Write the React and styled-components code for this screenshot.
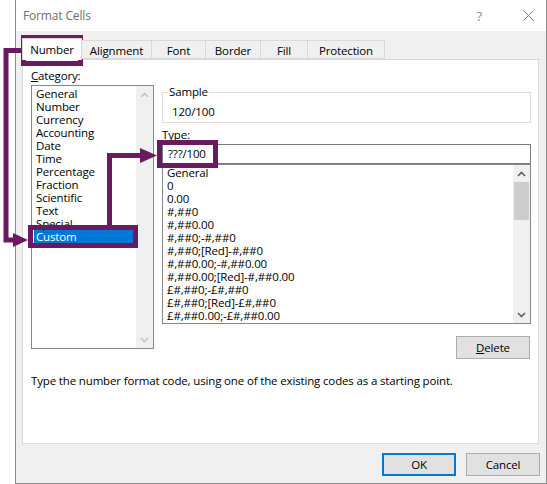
import React from "react";
import styled, { createGlobalStyle } from "styled-components";

const GlobalStyle = createGlobalStyle`
	html, body {
		margin: 0;
		padding: 0;
		background: #ffffff;
	}
	body {
		font-family: "Open Sans", "Noto Sans", sans-serif;
		font-size: 11.5px;
		letter-spacing: -0.15px;
		color: #000;
	}
`;

const purple = "#6a1b5f";

const Page = styled.div`
	position: relative;
	width: 547px;
	height: 484px;
	overflow: hidden;
`;

const Dialog = styled.div`
	box-sizing: border-box;
	margin-left: 15px;
	width: 532px;
	height: 484px;
	background: #f0f0f0;
	border: 1px solid #8c8c8c;
	border-top: none;
	display: flex;
	flex-direction: column;
`;

const TitleBar = styled.div`
	height: 31px;
	background: #fff;
	display: flex;
	align-items: center;
	padding: 0 12px 0 7px;
	color: #6f6f6f;
	font-size: 12px;

	.title {
		flex: 1;
	}
	.help {
		margin-right: 41px;
		font-size: 13px;
		color: #8a8a8a;
	}
`;

const Tabs = styled.div`
	display: flex;
	align-items: flex-end;
	height: 28px;
	padding-left: 6px;
	position: relative;
	z-index: 1;
`;

const Tab = styled.div`
	box-sizing: border-box;
	width: ${(p) => p.w}px;
	height: ${(p) => (p.active ? 22 : 19)}px;
	margin-bottom: ${(p) => (p.active ? -1 : 0)}px;
	display: flex;
	align-items: center;
	justify-content: center;
	background: ${(p) => (p.active ? "#fff" : "#f0f0f0")};
	border: 1px solid #d9d9d9;
	border-bottom: ${(p) => (p.active ? "none" : "1px solid #d9d9d9")};
	border-left: ${(p) => (p.first || p.active ? "1px solid #d9d9d9" : "none")};
	padding-top: ${(p) => (p.active ? 0 : 1)}px;
`;

const Panel = styled.div`
	box-sizing: border-box;
	margin-left: 6px;
	width: 517px;
	height: 385px;
	background: #fff;
	border: 1px solid #d9d9d9;
	padding: 7px 8px 0 8px;
	display: flex;
	flex-direction: column;
`;

const Columns = styled.div`
	display: flex;
	gap: 8px;
`;

const LeftCol = styled.div`
	width: 123px;
	display: flex;
	flex-direction: column;
`;

const RightCol = styled.div`
	width: 369px;
	padding-top: 25px;
	display: flex;
	flex-direction: column;
`;

const Label = styled.div`
	height: 18px;
	line-height: 18px;
	u {
		text-decoration: underline;
	}
`;

const ListBox = styled.div`
	box-sizing: border-box;
	width: ${(p) => p.w}px;
	height: ${(p) => p.h}px;
	border: 1px solid #828790;
	display: flex;
	overflow: hidden;
	background: #fff;
`;

const Items = styled.div`
	flex: 1;
	padding: 1px 1px 0 2px;
	overflow: hidden;
`;

const Item = styled.div`
	height: 13px;
	line-height: 13px;
	padding-left: 2px;
	white-space: nowrap;
	background: ${(p) => (p.selected ? "#0078d7" : "transparent")};
	color: ${(p) => (p.selected ? "#fff" : "#000")};
`;

const ScrollBar = styled.div`
	width: 17px;
	background: #f0f0f0;
	display: flex;
	flex-direction: column;
	align-items: center;
`;

const ScrollArrow = styled.div`
	height: 17px;
	width: 17px;
	display: flex;
	align-items: center;
	justify-content: center;
`;

const ScrollTrack = styled.div`
	flex: 1;
	width: 17px;
`;

const Thumb = styled.div`
	width: 15px;
	margin: 0 auto;
	height: 38px;
	background: #cdcdcd;
`;

const GroupBox = styled.div`
	box-sizing: border-box;
	width: 369px;
	height: 31px;
	border: 1px solid #dcdcdc;
	padding-left: 5px;

	.legend {
		display: block;
		width: fit-content;
		margin-top: -8px;
		padding: 0 1px;
		line-height: 14px;
		background: #fff;
	}
	.value {
		margin-top: 6px;
		padding-left: 4px;
		line-height: 14px;
	}
`;

const TypeLabel = styled.div`
	margin-top: 3px;
	height: 18px;
	line-height: 18px;
`;

const Input = styled.div`
	box-sizing: border-box;
	width: 369px;
	height: 20px;
	border: 1px solid #7a7a7a;
	padding-left: 5px;
	line-height: 18px;
`;

const ButtonRow = styled.div`
	display: flex;
	justify-content: flex-end;
	gap: 10px;
	padding-right: ${(p) => p.pr || 0}px;
	margin-top: ${(p) => p.mt || 0}px;
`;

const Button = styled.div`
	box-sizing: border-box;
	width: ${(p) => p.w || 74}px;
	height: 23px;
	display: flex;
	align-items: center;
	justify-content: center;
	background: #e1e1e1;
	border: ${(p) => (p.primary ? "2px solid #0078d7" : "1px solid #adadad")};
	u {
		text-decoration: underline;
	}
`;

const Hint = styled.div`
	margin-top: 14px;
	line-height: 16px;
`;

const Overlay = styled.svg`
	position: absolute;
	left: 0;
	top: 0;
	pointer-events: none;
`;

const Chevron = ({ up, color }) => (
	<svg width="9" height="6" viewBox="0 0 9 6">
		<path
			d={up ? "M1 5 L4.5 1.5 L8 5" : "M1 1 L4.5 4.5 L8 1"}
			fill="none"
			stroke={color}
			strokeWidth="1.6"
		/>
	</svg>
);

const categories = [
	"General",
	"Number",
	"Currency",
	"Accounting",
	"Date",
	"Time",
	"Percentage",
	"Fraction",
	"Scientific",
	"Text",
	"Special",
	"Custom",
];

const formats = [
	"General",
	"0",
	"0.00",
	"#,##0",
	"#,##0.00",
	"#,##0;-#,##0",
	"#,##0;[Red]-#,##0",
	"#,##0.00;-#,##0.00",
	"#,##0.00;[Red]-#,##0.00",
	"£#,##0;-£#,##0",
	"£#,##0;[Red]-£#,##0",
	"£#,##0.00;-£#,##0.00",
	"£#,##0.00;[Red]-£#,##0.00",
];

const tabs = [
	{ name: "Number", w: 60 },
	{ name: "Alignment", w: 70 },
	{ name: "Font", w: 54 },
	{ name: "Border", w: 55 },
	{ name: "Fill", w: 47 },
	{ name: "Protection", w: 77 },
];

const App = () => {
	return (
		<Page>
			<GlobalStyle />
			<Dialog>
				<TitleBar>
					<span className="title">Format Cells</span>
					<span className="help">?</span>
					<svg width="11" height="11" viewBox="0 0 11 11">
						<path d="M0.5 0.5 L10.5 10.5 M10.5 0.5 L0.5 10.5" stroke="#7a7a7a" strokeWidth="1" />
					</svg>
				</TitleBar>
				<Tabs>
					{tabs.map((t, i) => (
						<Tab key={t.name} w={t.w} active={i === 0} first={i === 0}>
							{t.name}
						</Tab>
					))}
				</Tabs>
				<Panel>
					<Columns>
						<LeftCol>
							<Label>
								<u>C</u>ategory:
							</Label>
							<ListBox w={123} h={264}>
								<Items>
									{categories.map((c) => (
										<Item key={c} selected={c === "Custom"}>
											{c}
										</Item>
									))}
								</Items>
								<ScrollBar>
									<ScrollArrow>
										<Chevron up color="#c4c4c4" />
									</ScrollArrow>
									<ScrollTrack />
									<ScrollArrow>
										<Chevron color="#c4c4c4" />
									</ScrollArrow>
								</ScrollBar>
							</ListBox>
						</LeftCol>
						<RightCol>
							<GroupBox>
								<span className="legend">Sample</span>
								<div className="value">120/100</div>
							</GroupBox>
							<TypeLabel>Type:</TypeLabel>
							<Input>???/100</Input>
							<ListBox w={369} h={160}>
								<Items>
									{formats.map((f) => (
										<Item key={f}>{f}</Item>
									))}
								</Items>
								<ScrollBar>
									<ScrollArrow>
										<Chevron up color="#606060" />
									</ScrollArrow>
									<ScrollTrack>
										<Thumb />
									</ScrollTrack>
									<ScrollArrow>
										<Chevron color="#606060" />
									</ScrollArrow>
								</ScrollBar>
							</ListBox>
						</RightCol>
					</Columns>
					<ButtonRow pr={0} mt={-13}>
						<Button w={74}>
							<span>
								<u>D</u>elete
							</span>
						</Button>
					</ButtonRow>
					<Hint>Type the number format code, using one of the existing codes as a starting point.</Hint>
				</Panel>
				<ButtonRow pr={6} mt={9}>
					<Button primary>OK</Button>
					<Button>Cancel</Button>
				</ButtonRow>
			</Dialog>
			<Overlay width="547" height="484" viewBox="0 0 547 484">
				<g fill="none" stroke={purple} strokeWidth="5">
					<rect x="23.5" y="37.5" width="57" height="26" />
					<path d="M21 50.5 H6 V240 H16" />
					<rect x="30.5" y="227.5" width="105" height="18" />
					<path d="M109.5 225 V155.5 H142" />
					<rect x="159.5" y="142.5" width="56" height="23" />
				</g>
				<g fill={purple}>
					<polygon points="13,233 28,240 13,247" />
					<polygon points="140,148 157,155.5 140,163" />
				</g>
			</Overlay>
		</Page>
	);
};

export default App;
